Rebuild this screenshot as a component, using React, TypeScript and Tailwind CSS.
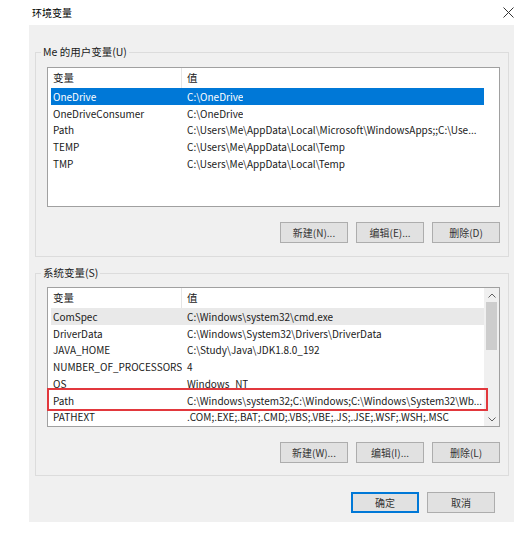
import clsx from 'clsx'
import { ReactNode } from 'react'

type Item = { name: string; value: string; state?: 'selected' | 'hover' | 'marked' }

const userVars: Item[] = [
  { name: 'OneDrive', value: 'C:\\OneDrive', state: 'selected' },
  { name: 'OneDriveConsumer', value: 'C:\\OneDrive' },
  { name: 'Path', value: 'C:\\Users\\Me\\AppData\\Local\\Microsoft\\WindowsApps;;C:\\Use...' },
  { name: 'TEMP', value: 'C:\\Users\\Me\\AppData\\Local\\Temp' },
  { name: 'TMP', value: 'C:\\Users\\Me\\AppData\\Local\\Temp' },
]

const systemVars: Item[] = [
  { name: 'ComSpec', value: 'C:\\Windows\\system32\\cmd.exe', state: 'hover' },
  { name: 'DriverData', value: 'C:\\Windows\\System32\\Drivers\\DriverData' },
  { name: 'JAVA_HOME', value: 'C:\\Study\\Java\\JDK1.8.0_192' },
  { name: 'NUMBER_OF_PROCESSORS', value: '4' },
  { name: 'OS', value: 'Windows_NT' },
  { name: 'Path', value: 'C:\\Windows\\system32;C:\\Windows;C:\\Windows\\System32\\Wb...', state: 'marked' },
  { name: 'PATHEXT', value: '.COM;.EXE;.BAT;.CMD;.VBS;.VBE;.JS;.JSE;.WSF;.WSH;.MSC' },
]

export default function App() {
  return (
    <div className="h-[540px] w-[532px] bg-white font-['Noto_Sans_CJK_SC','Noto_Sans',sans-serif] text-[10px] text-[#1a1a1a]">
      <div className="flex h-[25px] items-center justify-between pl-[32px] pr-[18px]">
        <span className="leading-none text-black">环境变量</span>
        <svg width="11" height="11" viewBox="0 0 11 11" className="text-[#333]">
          <path d="M0.5 0.5L10.5 10.5M10.5 0.5L0.5 10.5" stroke="currentColor" strokeWidth="1" />
        </svg>
      </div>
      <div className="ml-[29px] flex h-[497px] w-[485px] flex-col bg-[#f0f0f0] pb-[9px] pt-[19px]">
        <Group title="Me 的用户变量(U)" className="pb-[13px] pt-[7px]">
          <VarList items={userVars} />
          <ButtonRow labels={['新建(N)...', '编辑(E)...', '删除(D)']} />
        </Group>
        <Group title="系统变量(S)" outer="mt-[8px]" className="pb-[12px] pt-[6px]">
          <VarList items={systemVars} scroll />
          <ButtonRow labels={['新建(W)...', '编辑(I)...', '删除(L)']} />
        </Group>
        <div className="mt-[16px] flex justify-end gap-[8px] pr-[19px]">
          <Button primary>确定</Button>
          <Button>取消</Button>
        </div>
      </div>
    </div>
  )
}

const Group = ({
  title,
  outer,
  className,
  children,
}: {
  title: string
  outer?: string
  className?: string
  children: ReactNode
}) => {
  return (
    <fieldset className={clsx('ml-[6px] mr-[5px] border border-[#dcdcdc] p-0', outer)}>
      <legend className="ml-[5px] px-[2px] text-[10.5px] leading-[16px] text-[#1a1a1a]">{title}</legend>
      <div className={clsx('pl-[11px] pr-[8px]', className)}>{children}</div>
    </fieldset>
  )
}

const VarList = ({ items, scroll }: { items: Item[]; scroll?: boolean }) => {
  return (
    <div className="flex h-[140px] w-[453px] border border-[#a0a0a0] bg-white text-[10px]">
      <div className="flex-1">
        <div className="ml-[3px] flex h-[20px] items-center text-[10.5px]">
          <div className="h-full w-[131px] border-r border-[#e5e5e5] pl-[2px] leading-[20px]">变量</div>
          <div className="pl-[5px]">值</div>
        </div>
        {items.map((item) => (
          <div
            key={item.name}
            className={clsx(
              'relative ml-[3px] flex h-[16.75px] w-[433px] items-center whitespace-nowrap',
              item.state === 'selected' && 'bg-[#0078d7] text-white',
              item.state === 'hover' && 'bg-[#e9e9e9]'
            )}
          >
            <div className="w-[131px] shrink-0 overflow-hidden pl-[2px]">{item.name}</div>
            <div className="overflow-hidden pl-[5px]">{item.value}</div>
            {item.state === 'marked' && (
              <div className="pointer-events-none absolute -bottom-[2px] -left-[4px] -right-[4px] -top-[4px] border-2 border-[#e2383d]" />
            )}
          </div>
        ))}
      </div>
      {scroll && (
        <div className="flex w-[15px] flex-col bg-[#f0f0f0]">
          <div className="flex h-[14px] items-center justify-center">
            <svg width="8" height="5" viewBox="0 0 8 5">
              <path d="M0.5 4.5L4 1L7.5 4.5" fill="none" stroke="#606060" strokeWidth="1" />
            </svg>
          </div>
          <div className="mx-[2px] h-[48px] bg-[#cdcdcd]" />
          <div className="flex-1" />
          <div className="flex h-[14px] items-center justify-center">
            <svg width="8" height="5" viewBox="0 0 8 5">
              <path d="M0.5 0.5L4 4L7.5 0.5" fill="none" stroke="#606060" strokeWidth="1" />
            </svg>
          </div>
        </div>
      )}
    </div>
  )
}

const ButtonRow = ({ labels }: { labels: string[] }) => {
  return (
    <div className="mt-[15px] flex justify-end gap-[8px]">
      {labels.map((label) => (
        <Button key={label}>{label}</Button>
      ))}
    </div>
  )
}

const Button = ({ children, primary }: { children: ReactNode; primary?: boolean }) => {
  return (
    <div
      className={clsx(
        'flex h-[21px] w-[68px] items-center justify-center border bg-[#e1e1e1] text-[10px] text-[#333]',
        primary ? 'border-[#0078d7] shadow-[inset_0_0_0_1px_#0078d7]' : 'border-[#adadad]'
      )}
    >
      {children}
    </div>
  )
}
